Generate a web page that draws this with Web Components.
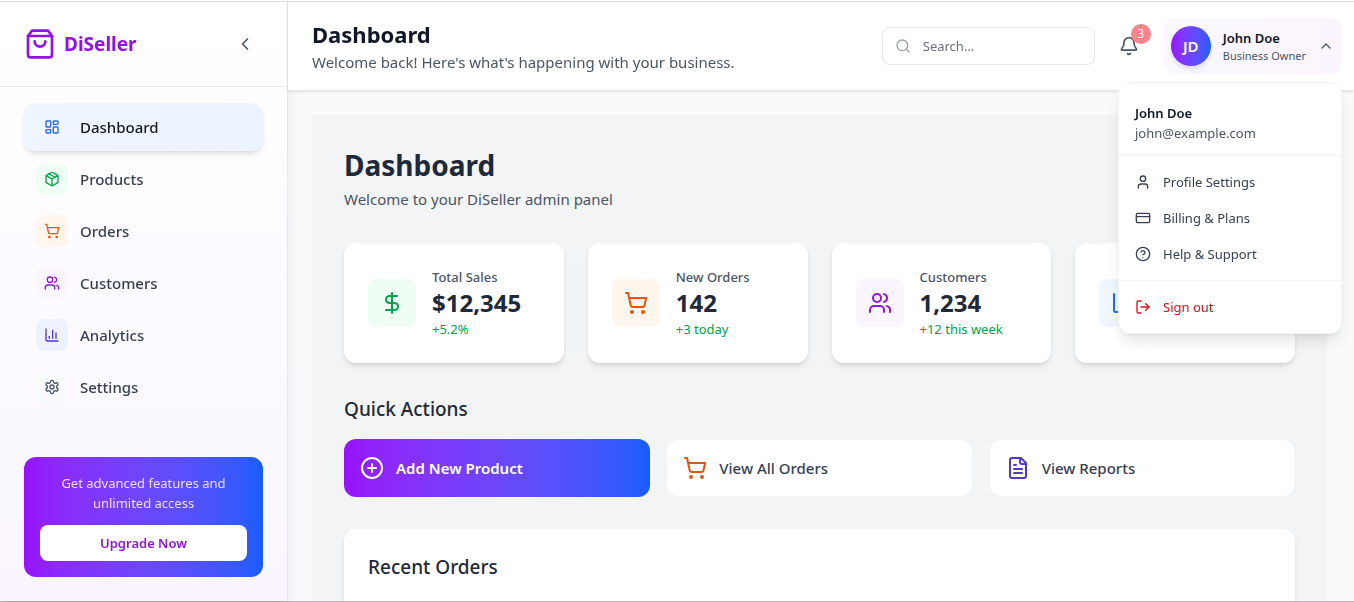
<!DOCTYPE html>
<html lang="en">
<head>
<meta charset="utf-8">
<meta name="viewport" content="width=device-width, initial-scale=1">
<title>DiSeller - Dashboard</title>
<style>
  :root {
    --purple: #9810fa;
    --blue: #155dfc;
    --gray-50: #f9fafb;
    --gray-100: #f3f4f6;
    --gray-200: #e5e7eb;
    --gray-500: #6a7282;
    --gray-600: #4a5565;
    --gray-700: #364153;
    --gray-800: #1e2939;
    --gray-900: #101828;
    --green: #00a34a;
    --orange: #e4540c;
    --violet: #8d16dc;
    --indigo: #5138d0;
    --brand-gradient: linear-gradient(to right in oklab, var(--purple), var(--blue));
    --shadow-md: 0 4px 6px -1px rgb(0 0 0 / 0.1), 0 2px 4px -2px rgb(0 0 0 / 0.1);
  }

  body {
    margin: 0;
    color: var(--gray-900);
    font-family: "Noto Sans", "Open Sans", sans-serif;
    font-size: 15px;
    line-height: 24px;
  }
</style>
</head>
<body>
<app-shell>
  <side-bar slot="sidebar">
    <nav-item icon="dashboard" tone="blue" active>Dashboard</nav-item>
    <nav-item icon="package" tone="green">Products</nav-item>
    <nav-item icon="cart" tone="orange">Orders</nav-item>
    <nav-item icon="users" tone="purple">Customers</nav-item>
    <nav-item icon="chart" tone="indigo">Analytics</nav-item>
    <nav-item icon="settings" tone="gray">Settings</nav-item>
    <upgrade-card slot="footer">Get advanced features and unlimited access</upgrade-card>
  </side-bar>

  <top-bar slot="header">
    <span slot="title">Dashboard</span>
    <span slot="subtitle">Welcome back! Here's what's happening with your business.</span>
    <search-box slot="actions"></search-box>
    <notification-bell slot="actions" count="3"></notification-bell>
    <user-menu slot="actions" name="John Doe" initials="JD" role-name="Business Owner" email="john@example.com" open>
      <menu-item icon="user">Profile Settings</menu-item>
      <menu-item icon="card">Billing &amp; Plans</menu-item>
      <menu-item icon="help">Help &amp; Support</menu-item>
      <menu-item slot="footer" icon="logout" danger>Sign out</menu-item>
    </user-menu>
  </top-bar>

  <dashboard-page>
    <span slot="title">Dashboard</span>
    <span slot="subtitle">Welcome to your DiSeller admin panel</span>
    <stat-card slot="stats" icon="dollar" tone="green" label="Total Sales" value="$12,345" change="+5.2%"></stat-card>
    <stat-card slot="stats" icon="cart" tone="orange" label="New Orders" value="142" change="+3 today"></stat-card>
    <stat-card slot="stats" icon="users" tone="purple" label="Customers" value="1,234" change="+12 this week"></stat-card>
    <stat-card slot="stats" icon="chart" tone="blue"></stat-card>
    <quick-action slot="quick" icon="plus" primary>Add New Product</quick-action>
    <quick-action slot="quick" icon="cart" tone="orange">View All Orders</quick-action>
    <quick-action slot="quick" icon="file" tone="indigo">View Reports</quick-action>
    <span slot="orders-title">Recent Orders</span>
  </dashboard-page>
</app-shell>

<script>
const icons = {
  bag: '<path d="M6 2 3 6v14a2 2 0 0 0 2 2h14a2 2 0 0 0 2-2V6l-3-4Z"/><path d="M3 6h18"/><path d="M16 10a4 4 0 0 1-8 0"/>',
  left: '<path d="m15 18-6-6 6-6"/>',
  up: '<path d="m18 15-6-6-6 6"/>',
  dashboard:
    '<rect width="7" height="9" x="3" y="3" rx="1"/><rect width="7" height="5" x="14" y="3" rx="1"/><rect width="7" height="9" x="14" y="12" rx="1"/><rect width="7" height="5" x="3" y="16" rx="1"/>',
  package:
    '<path d="M11 21.73a2 2 0 0 0 2 0l7-4A2 2 0 0 0 21 16V8a2 2 0 0 0-1-1.73l-7-4a2 2 0 0 0-2 0l-7 4A2 2 0 0 0 3 8v8a2 2 0 0 0 1 1.73z"/><path d="M12 22V12"/><path d="m3.3 7 8.7 5 8.7-5"/><path d="m7.5 4.27 9 5.15"/>',
  cart: '<circle cx="8" cy="21" r="1"/><circle cx="19" cy="21" r="1"/><path d="M2.05 2.05h2l2.66 12.42a2 2 0 0 0 2 1.58h9.78a2 2 0 0 0 1.95-1.57l1.65-7.43H5.12"/>',
  users:
    '<path d="M16 21v-2a4 4 0 0 0-4-4H6a4 4 0 0 0-4 4v2"/><circle cx="9" cy="7" r="4"/><path d="M22 21v-2a4 4 0 0 0-3-3.87"/><path d="M16 3.13a4 4 0 0 1 0 7.75"/>',
  chart: '<path d="M3 3v16a2 2 0 0 0 2 2h16"/><path d="M18 17V9"/><path d="M13 17V5"/><path d="M8 17v-3"/>',
  settings:
    '<path d="M12.22 2h-.44a2 2 0 0 0-2 2v.18a2 2 0 0 1-1 1.73l-.43.25a2 2 0 0 1-2 0l-.15-.08a2 2 0 0 0-2.73.73l-.22.38a2 2 0 0 0 .73 2.73l.15.1a2 2 0 0 1 1 1.72v.51a2 2 0 0 1-1 1.74l-.15.09a2 2 0 0 0-.73 2.73l.22.38a2 2 0 0 0 2.73.73l.15-.08a2 2 0 0 1 2 0l.43.25a2 2 0 0 1 1 1.73V20a2 2 0 0 0 2 2h.44a2 2 0 0 0 2-2v-.18a2 2 0 0 1 1-1.73l.43-.25a2 2 0 0 1 2 0l.15.08a2 2 0 0 0 2.73-.73l.22-.39a2 2 0 0 0-.73-2.73l-.15-.08a2 2 0 0 1-1-1.74v-.5a2 2 0 0 1 1-1.74l.15-.09a2 2 0 0 0 .73-2.73l-.22-.38a2 2 0 0 0-2.73-.73l-.15.08a2 2 0 0 1-2 0l-.43-.25a2 2 0 0 1-1-1.73V4a2 2 0 0 0-2-2z"/><circle cx="12" cy="12" r="3"/>',
  search: '<circle cx="11" cy="11" r="8"/><path d="m21 21-4.3-4.3"/>',
  bell: '<path d="M10.27 21a2 2 0 0 0 3.46 0"/><path d="M3.26 15.33A1 1 0 0 0 4 17h16a1 1 0 0 0 .74-1.67C19.41 13.96 18 12.5 18 8A6 6 0 0 0 6 8c0 4.5-1.41 5.96-2.74 7.33"/>',
  user: '<path d="M19 21v-2a4 4 0 0 0-4-4H9a4 4 0 0 0-4 4v2"/><circle cx="12" cy="7" r="4"/>',
  card: '<rect width="20" height="14" x="2" y="5" rx="2"/><path d="M2 10h20"/>',
  help: '<circle cx="12" cy="12" r="10"/><path d="M9.09 9a3 3 0 0 1 5.83 1c0 2-3 3-3 3"/><path d="M12 17h.01"/>',
  logout: '<path d="M9 21H5a2 2 0 0 1-2-2V5a2 2 0 0 1 2-2h4"/><path d="m16 17 5-5-5-5"/><path d="M21 12H9"/>',
  dollar: '<path d="M12 2v20"/><path d="M17 5H9.5a3.5 3.5 0 0 0 0 7h5a3.5 3.5 0 0 1 0 7H6"/>',
  plus: '<circle cx="12" cy="12" r="10"/><path d="M8 12h8"/><path d="M12 8v8"/>',
  file: '<path d="M15 2H6a2 2 0 0 0-2 2v16a2 2 0 0 0 2 2h12a2 2 0 0 0 2-2V7Z"/><path d="M14 2v4a2 2 0 0 0 2 2h4"/><path d="M10 9H8"/><path d="M16 13H8"/><path d="M16 17H8"/>',
}

const tones = {
  blue: ['#2868ec', '#eff6ff'],
  green: ['var(--green)', '#f0fdf4'],
  orange: ['var(--orange)', '#fff7ed'],
  purple: ['var(--violet)', '#faf5ff'],
  indigo: ['var(--indigo)', '#eef2ff'],
  gray: ['var(--gray-600)', 'var(--gray-50)'],
}

const base = `
  *, *::before, *::after { box-sizing: border-box; }
  h1, h2, p { margin: 0; }
  button { border: 0; background: none; color: inherit; font: inherit; text-align: start; cursor: pointer; }
  a { color: inherit; text-decoration: none; }
`

class BaseElement extends HTMLElement {
  constructor() {
    super()

    this.attachShadow({ mode: 'open' })
  }

  get tone() {
    return tones[this.getAttribute('tone')] ?? ['currentColor', 'transparent']
  }

  attr(name) {
    return this.getAttribute(name) ?? ''
  }

  connectedCallback() {
    this.shadowRoot.innerHTML = `<style>${base}${this.styles()}</style>${this.markup()}`
  }
}

class UiIcon extends BaseElement {
  styles() {
    return `
      :host { display: block; flex: none; width: var(--icon-size, 16px); height: var(--icon-size, 16px); }
      svg { display: block; width: 100%; height: 100%; }
    `
  }

  markup() {
    return `
      <svg viewBox="0 0 24 24" fill="none" stroke="currentColor" stroke-width="2" stroke-linecap="round" stroke-linejoin="round" aria-hidden="true">
        ${icons[this.attr('name')]}
      </svg>
    `
  }
}

class AppShell extends BaseElement {
  styles() {
    return `
      :host {
        display: grid;
        grid-template-columns: 288px minmax(0, 1fr);
        height: 100vh;
        box-sizing: border-box;
        padding-top: 1px;
        border-bottom: 1px solid #b8babd;
        background: #fff;
      }
      .side { display: grid; position: relative; z-index: 1; border-top: 1px solid #dcdee0; }
      .content { display: flex; flex-direction: column; min-width: 0; min-height: 0; border-top: 1px solid #dcdee0; }
      .head { position: relative; z-index: 2; }
      main {
        flex: 1;
        min-height: 0;
        overflow: auto;
        scrollbar-width: none;
        padding: 24px 27px 24px 24px;
        background: var(--gray-50);
      }
    `
  }

  markup() {
    return `
      <div class="side"><slot name="sidebar"></slot></div>
      <div class="content">
        <div class="head"><slot name="header"></slot></div>
        <main><slot></slot></main>
      </div>
    `
  }
}

class SideBar extends BaseElement {
  styles() {
    return `
      :host {
        display: flex;
        flex-direction: column;
        border-right: 1px solid var(--gray-200);
        background: linear-gradient(to bottom, #fff, #faf5ff);
        box-shadow: 0 10px 15px -3px rgb(0 0 0 / 0.1), 0 4px 6px -4px rgb(0 0 0 / 0.1);
      }
      header {
        display: flex;
        align-items: center;
        justify-content: space-between;
        padding: 24px;
        border-bottom: 1px solid var(--gray-200);
      }
      .brand { display: flex; align-items: center; gap: 8px; height: 36px; color: #9212e6; font-size: 19px; font-weight: 700; }
      .brand ui-icon { --icon-size: 32px; }
      button { padding: 8px; color: var(--gray-600); }
      button ui-icon { --icon-size: 20px; }
      nav { display: flex; flex-direction: column; gap: 4px; padding: 16px 24px; }
      footer { margin-top: auto; padding: 0 24px 24px; }
    `
  }

  markup() {
    return `
      <header>
        <a class="brand" href="#"><ui-icon name="bag"></ui-icon>DiSeller</a>
        <button type="button" aria-label="Collapse sidebar"><ui-icon name="left"></ui-icon></button>
      </header>
      <nav><slot></slot></nav>
      <footer><slot name="footer"></slot></footer>
    `
  }
}

class NavItem extends BaseElement {
  styles() {
    const [color, background] = this.tone

    return `
      :host { display: block; }
      a {
        display: flex;
        align-items: center;
        gap: 12px;
        padding: 8px 12px;
        border-radius: 12px;
        color: var(--gray-700);
        font-weight: 500;
      }
      .icon { padding: 8px; border-radius: 8px; background: ${background}; color: ${color}; }
      :host([active]) a {
        background: linear-gradient(to right, #eff6ff, #eef4ff);
        box-shadow: var(--shadow-md);
        color: var(--gray-900);
      }
    `
  }

  markup() {
    return `
      <a href="#" ${this.hasAttribute('active') ? 'aria-current="page"' : ''}>
        <span class="icon"><ui-icon name="${this.attr('icon')}"></ui-icon></span>
        <slot></slot>
      </a>
    `
  }
}

class UpgradeCard extends BaseElement {
  styles() {
    return `
      :host {
        display: flex;
        flex-direction: column;
        gap: 12px;
        padding: 16px;
        border-radius: 12px;
        background: var(--brand-gradient);
        font-size: 13px;
        line-height: 20px;
        text-align: center;
      }
      p { color: #f0e0ff; }
      button {
        padding: 8px 16px;
        border-radius: 8px;
        background: #fff;
        color: var(--violet);
        font-weight: 600;
        text-align: center;
      }
    `
  }

  markup() {
    return `
      <p><slot></slot></p>
      <button type="button">Upgrade Now</button>
    `
  }
}

class TopBar extends BaseElement {
  styles() {
    return `
      :host {
        display: flex;
        align-items: center;
        justify-content: space-between;
        padding: 16px 12px 16px 24px;
        border-bottom: 1px solid var(--gray-200);
        background: #fff;
        box-shadow: 0 1px 3px rgb(0 0 0 / 0.1);
      }
      h1 { font-size: 22px; line-height: 32px; font-weight: 700; }
      p { color: var(--gray-600); }
      .actions { display: flex; align-items: center; gap: 16px; }
    `
  }

  markup() {
    return `
      <div>
        <h1><slot name="title"></slot></h1>
        <p><slot name="subtitle"></slot></p>
      </div>
      <div class="actions"><slot name="actions"></slot></div>
    `
  }
}

class SearchBox extends BaseElement {
  styles() {
    return `
      :host { display: block; width: 213px; }
      label {
        display: flex;
        align-items: center;
        gap: 12px;
        padding: 8px 12px;
        border: 1px solid var(--gray-200);
        border-radius: 8px;
        color: #99a1af;
      }
      input {
        width: 100%;
        min-width: 0;
        height: 20px;
        padding: 0;
        border: 0;
        outline: 0;
        background: none;
        color: var(--gray-900);
        font: inherit;
        font-size: 13px;
      }
      input::placeholder { color: var(--gray-500); }
    `
  }

  markup() {
    return `<label><ui-icon name="search"></ui-icon><input type="text" placeholder="Search..." aria-label="Search"></label>`
  }
}

class NotificationBell extends BaseElement {
  styles() {
    return `
      :host { display: block; }
      button { position: relative; display: block; padding: 8px; color: var(--gray-600); }
      ui-icon { --icon-size: 20px; }
      .badge {
        position: absolute;
        top: -4px;
        right: -4px;
        width: 20px;
        border-radius: 10px;
        background: #ff8389;
        color: #fff;
        font-size: 12px;
        line-height: 20px;
        text-align: center;
      }
    `
  }

  markup() {
    return `
      <button type="button" aria-label="Notifications">
        <ui-icon name="bell"></ui-icon>
        <span class="badge">${this.attr('count')}</span>
      </button>
    `
  }
}

class UserMenu extends BaseElement {
  styles() {
    return `
      :host { display: block; position: relative; font-size: 13px; line-height: 20px; }
      .toggle {
        display: flex;
        align-items: center;
        gap: 12px;
        padding: 8px;
        border-radius: 12px;
        background: linear-gradient(to right, #faf7ff, #fbf5ff);
        color: var(--gray-600);
      }
      .avatar {
        width: 40px;
        border-radius: 50%;
        background: var(--brand-gradient);
        box-shadow: var(--shadow-md);
        color: #fff;
        font-size: 15px;
        font-weight: 600;
        line-height: 40px;
        text-align: center;
      }
      .name { display: block; color: var(--gray-900); font-weight: 600; }
      .role { display: block; font-size: 11px; line-height: 16px; }
      .menu {
        display: none;
        position: absolute;
        top: calc(100% + 8px);
        right: 0;
        width: 224px;
        padding: 8px 0;
        border: 1px solid var(--gray-100);
        border-radius: 12px;
        background: #fff;
        box-shadow: 0 10px 15px -3px rgb(0 0 0 / 0.1), 0 4px 6px -4px rgb(0 0 0 / 0.1);
      }
      :host([open]) .menu { display: block; }
      .account { padding: 12px 16px; color: var(--gray-600); }
      .group { padding: 8px 0; border-top: 1px solid var(--gray-100); }
      .group:last-child { padding-bottom: 0; }
    `
  }

  markup() {
    return `
      <button class="toggle" type="button" aria-haspopup="true" aria-expanded="${this.hasAttribute('open')}">
        <span class="avatar">${this.attr('initials')}</span>
        <span>
          <span class="name">${this.attr('name')}</span>
          <span class="role">${this.attr('role-name')}</span>
        </span>
        <ui-icon name="up"></ui-icon>
      </button>
      <div class="menu">
        <div class="account">
          <span class="name">${this.attr('name')}</span>
          ${this.attr('email')}
        </div>
        <div class="group"><slot></slot></div>
        <div class="group"><slot name="footer"></slot></div>
      </div>
    `
  }

  connectedCallback() {
    super.connectedCallback()

    const toggle = this.shadowRoot.querySelector('.toggle')

    toggle.addEventListener('click', () => {
      const isOpen = this.toggleAttribute('open')

      toggle.setAttribute('aria-expanded', isOpen)
    })
  }
}

class MenuItem extends BaseElement {
  styles() {
    return `
      :host { display: block; }
      button {
        display: flex;
        align-items: center;
        gap: 12px;
        width: 100%;
        padding: 8px 16px;
        color: var(--gray-700);
      }
      button:hover { background: var(--gray-50); }
      :host([danger]) button { color: #d9101c; }
    `
  }

  markup() {
    return `<button type="button"><ui-icon name="${this.attr('icon')}"></ui-icon><slot></slot></button>`
  }
}

class DashboardPage extends BaseElement {
  styles() {
    return `
      :host { display: block; padding: 32px; background: var(--gray-100); color: var(--gray-800); }
      h1 { font-size: 28px; line-height: 36px; font-weight: 700; }
      h1 + p { margin-top: 4px; color: var(--gray-600); }
      h2 { font-size: 19px; line-height: 28px; font-weight: 500; }
      .stats { display: grid; grid-template-columns: repeat(4, 1fr); gap: 24px; margin: 32px 0; }
      .quick { display: grid; grid-template-columns: repeat(3, 1fr); gap: 16px; margin: 16px 0 32px; }
      .orders { min-height: 240px; padding: 24px; border-radius: 12px; background: #fff; box-shadow: var(--shadow-md); }
    `
  }

  markup() {
    return `
      <h1><slot name="title"></slot></h1>
      <p><slot name="subtitle"></slot></p>
      <div class="stats"><slot name="stats"></slot></div>
      <h2>Quick Actions</h2>
      <div class="quick"><slot name="quick"></slot></div>
      <section class="orders">
        <h2><slot name="orders-title"></slot></h2>
      </section>
    `
  }
}

class StatCard extends BaseElement {
  styles() {
    const [color, background] = this.tone

    return `
      :host {
        display: flex;
        align-items: center;
        gap: 16px;
        padding: 24px;
        border-radius: 12px;
        background: #fff;
        box-shadow: var(--shadow-md);
        font-size: 13px;
        line-height: 20px;
      }
      .icon { padding: 12px; border-radius: 8px; background: ${background}; color: ${color}; --icon-size: 24px; }
      .label { color: var(--gray-600); font-weight: 500; }
      .value { font-size: 24px; line-height: 32px; font-weight: 700; }
      .change { color: var(--green); }
    `
  }

  markup() {
    return `
      <span class="icon"><ui-icon name="${this.attr('icon')}"></ui-icon></span>
      <div>
        <p class="label">${this.attr('label')}</p>
        <p class="value">${this.attr('value')}</p>
        <p class="change">${this.attr('change')}</p>
      </div>
    `
  }
}

class QuickAction extends BaseElement {
  styles() {
    return `
      :host { display: grid; }
      button {
        display: flex;
        align-items: center;
        gap: 12px;
        padding: 16px;
        border: 1px solid var(--gray-100);
        border-radius: 12px;
        background: #fff;
        color: var(--gray-700);
        font-weight: 500;
      }
      ui-icon { --icon-size: 24px; color: ${this.tone[0]}; }
      :host([primary]) button { border: 0; background: var(--brand-gradient); color: #fff; font-weight: 600; }
    `
  }

  markup() {
    return `<button type="button"><ui-icon name="${this.attr('icon')}"></ui-icon><slot></slot></button>`
  }
}

customElements.define('ui-icon', UiIcon)
customElements.define('app-shell', AppShell)
customElements.define('side-bar', SideBar)
customElements.define('nav-item', NavItem)
customElements.define('upgrade-card', UpgradeCard)
customElements.define('top-bar', TopBar)
customElements.define('search-box', SearchBox)
customElements.define('notification-bell', NotificationBell)
customElements.define('user-menu', UserMenu)
customElements.define('menu-item', MenuItem)
customElements.define('dashboard-page', DashboardPage)
customElements.define('stat-card', StatCard)
customElements.define('quick-action', QuickAction)
</script>
</body>
</html>
